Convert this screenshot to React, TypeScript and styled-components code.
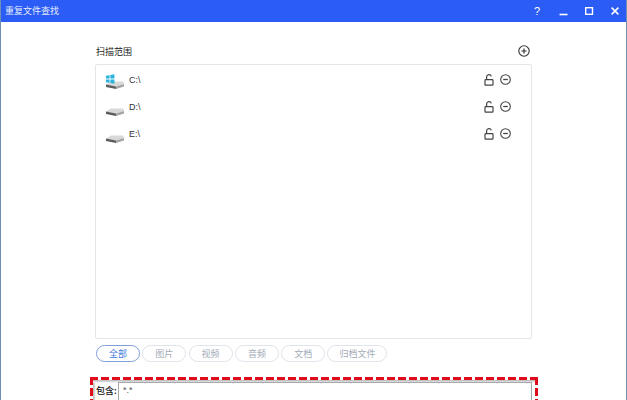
import React from 'react'
import styled, { createGlobalStyle } from 'styled-components'

const GlobalStyle = createGlobalStyle`
  html, body {
    margin: 0;
    padding: 0;
    background: #fff;
    overflow: hidden;
  }
  * {
    box-sizing: border-box;
  }
`

const drives = [
  { id: 'c', label: 'C:\\', system: true },
  { id: 'd', label: 'D:\\', system: false },
  { id: 'e', label: 'E:\\', system: false },
]

const filters = [
  { label: '全部', width: 44, active: true },
  { label: '图片', width: 44 },
  { label: '视频', width: 44 },
  { label: '音频', width: 44 },
  { label: '文档', width: 44 },
  { label: '归档文件', width: 60 },
]

const DriveIcon: React.FC<{ system: boolean }> = ({ system }) => (
  <svg width="20" height="18" viewBox="0 0 20 18">
    <path d="M1 11.5 L6 8.5 H18 L19 11 L11 13.5 Z" fill="#d8d8d8" />
    <path d="M1 11.5 L11 13.5 V16 L1 14 Z" fill="#5c5c5c" />
    <path d="M11 13.5 L19 11 V13.5 L11 16 Z" fill="#a4a4a4" />
    {system && (
      <g fill="#27b4dc">
        <path d="M1 2.8 L4.6 2.2 V5.6 H1 Z" />
        <path d="M5.4 2 L9.4 1.3 V5.6 H5.4 Z" />
        <path d="M1 6.4 H4.6 V9.8 L1 9.2 Z" />
        <path d="M5.4 6.4 H9.4 V10.7 L5.4 10 Z" />
      </g>
    )}
  </svg>
)

const LockIcon = () => (
  <svg width="10" height="12" viewBox="0 0 10 12" fill="none" stroke="#444" strokeWidth="1.2">
    <rect x="1" y="5.6" width="8" height="5.6" rx="0.8" />
    <path d="M2.6 5.6 V3 A2.4 2.4 0 0 1 7.3 2.4" />
  </svg>
)

const MinusIcon = () => (
  <svg width="11" height="11" viewBox="0 0 11 11" fill="none" stroke="#444" strokeWidth="1.1">
    <circle cx="5.5" cy="5.5" r="4.8" />
    <path d="M3.2 5.5 H7.8" strokeWidth="1.3" />
  </svg>
)

const PlusIcon = () => (
  <svg width="12" height="12" viewBox="0 0 12 12" fill="none" stroke="#333" strokeWidth="1.1">
    <circle cx="6" cy="6" r="5.2" />
    <path d="M3.4 6 H8.6 M6 3.4 V8.6" strokeWidth="1.2" />
  </svg>
)

const App: React.FC = () => (
  <Window>
    <GlobalStyle />
    <TitleBar>
      <Title>重复文件查找</Title>
      <Controls>
        <HelpButton>?</HelpButton>
        <svg width="10" height="10" viewBox="0 0 10 10" stroke="#fff" strokeWidth="1.6" fill="none">
          <path d="M1.5 8.5 H9.5" />
        </svg>
        <svg width="10" height="10" viewBox="0 0 10 10" stroke="#fff" strokeWidth="1.4" fill="none">
          <rect x="1.7" y="1.7" width="6.8" height="6.6" />
        </svg>
        <svg width="10" height="10" viewBox="0 0 10 10" stroke="#fff" strokeWidth="1.5" fill="none">
          <path d="M1.6 1.6 L8.4 8.4 M8.4 1.6 L1.6 8.4" />
        </svg>
      </Controls>
    </TitleBar>

    <Content>
      <SectionHeader>
        <SectionLabel>扫描范围</SectionLabel>
        <PlusIcon />
      </SectionHeader>

      <DriveList>
        {drives.map((drive) => (
          <DriveRow key={drive.id}>
            <DriveIcon system={drive.system} />
            <DriveLabel>{drive.label}</DriveLabel>
            <RowActions>
              <LockIcon />
              <MinusIcon />
            </RowActions>
          </DriveRow>
        ))}
      </DriveList>

      <FilterRow>
        {filters.map((filter) => (
          <FilterPill key={filter.label} $active={filter.active} $width={filter.width}>
            {filter.label}
          </FilterPill>
        ))}
      </FilterRow>

      <Highlight>
        <IncludeLabel>包含:</IncludeLabel>
        <IncludeInput>*.*</IncludeInput>
      </Highlight>
    </Content>
  </Window>
)

export default App

const Window = styled.div`
  width: 627px;
  height: 400px;
  overflow: hidden;
  display: flex;
  flex-direction: column;
  background: #fff;
  border-left: 1px solid #6f8fb5;
  border-right: 1px solid #6f8fb5;
  font-family: 'Noto Sans CJK SC', 'Liberation Sans', sans-serif;
`

const TitleBar = styled.div`
  height: 22px;
  flex: none;
  margin: 0 -1px;
  padding: 0 7px 1px 5px;
  display: flex;
  align-items: center;
  justify-content: space-between;
  background: #2b5df6;
`

const Title = styled.div`
  font-size: 9px;
  color: #e4ebff;
`

const Controls = styled.div`
  display: flex;
  align-items: center;
  gap: 16px;
`

const HelpButton = styled.span`
  width: 10px;
  text-align: center;
  font-family: 'Liberation Sans', sans-serif;
  font-size: 11px;
  line-height: 10px;
  color: #fff;
`

const Content = styled.div`
  flex: 1;
  display: flex;
  flex-direction: column;
  padding: 21px 94px 0;
`

const SectionHeader = styled.div`
  height: 21px;
  padding: 2px 2px 0 1px;
  display: flex;
  align-items: flex-start;
  justify-content: space-between;
`

const SectionLabel = styled.div`
  margin-top: 1px;
  font-size: 9px;
  line-height: 12px;
  color: #222;
`

const DriveList = styled.div`
  height: 275px;
  flex: none;
  padding-top: 3px;
  border: 1px solid #e4e6ea;
  border-radius: 2px;
  display: flex;
  flex-direction: column;
`

const DriveRow = styled.div`
  height: 27px;
  flex: none;
  padding: 0 20px 0 9px;
  display: flex;
  align-items: center;
`

const DriveLabel = styled.span`
  margin-left: 4px;
  padding-bottom: 3px;
  font-family: 'Liberation Sans', sans-serif;
  font-size: 9px;
  color: #333;
`

const RowActions = styled.div`
  margin-left: auto;
  padding-bottom: 4px;
  display: flex;
  align-items: center;
  gap: 6px;
`

const FilterRow = styled.div`
  margin-top: 6px;
  padding-left: 1px;
  display: flex;
  gap: 2.3px;
`

const FilterPill = styled.div<{ $active?: boolean; $width: number }>`
  width: ${(props) => props.$width}px;
  height: 17px;
  display: flex;
  align-items: center;
  justify-content: center;
  border-radius: 9px;
  border: 1px solid ${(props) => (props.$active ? '#7fa0d8' : '#dfe3ea')};
  font-size: 9px;
  color: ${(props) => (props.$active ? '#3f78e0' : '#a3abb8')};
`

// long dashes like the annotation in the screenshot, css dashed comes out too short
const Highlight = styled.div`
  margin: 15px -6px 0 -5px;
  height: 40px;
  flex: none;
  padding: 5px 6px 0 6px;
  display: flex;
  align-items: flex-start;
  background-image:
    repeating-linear-gradient(90deg, #e00c1c 0 8px, transparent 8px 11px),
    repeating-linear-gradient(180deg, #e00c1c 0 8px, transparent 8px 11px),
    repeating-linear-gradient(180deg, #e00c1c 0 8px, transparent 8px 11px),
    linear-gradient(180deg, #b4b4b4, #fff),
    linear-gradient(90deg, #b4b4b4, #fff);
  background-size: 100% 3px, 3px 100%, 3px 100%, 100% 3px, 3px 100%;
  background-position: 0 0, 0 0, 100% 0, 0 3px, 3px 0;
  background-repeat: no-repeat;
`

const IncludeLabel = styled.span`
  width: 22px;
  flex: none;
  font-size: 9px;
  font-weight: 500;
  line-height: 17px;
  color: #111;
`

const IncludeInput = styled.div`
  flex: 1;
  height: 24px;
  padding-left: 4px;
  border: 1px solid #a8a8a8;
  font-family: 'Liberation Sans', sans-serif;
  font-size: 9px;
  line-height: 14px;
  color: #555;
`
